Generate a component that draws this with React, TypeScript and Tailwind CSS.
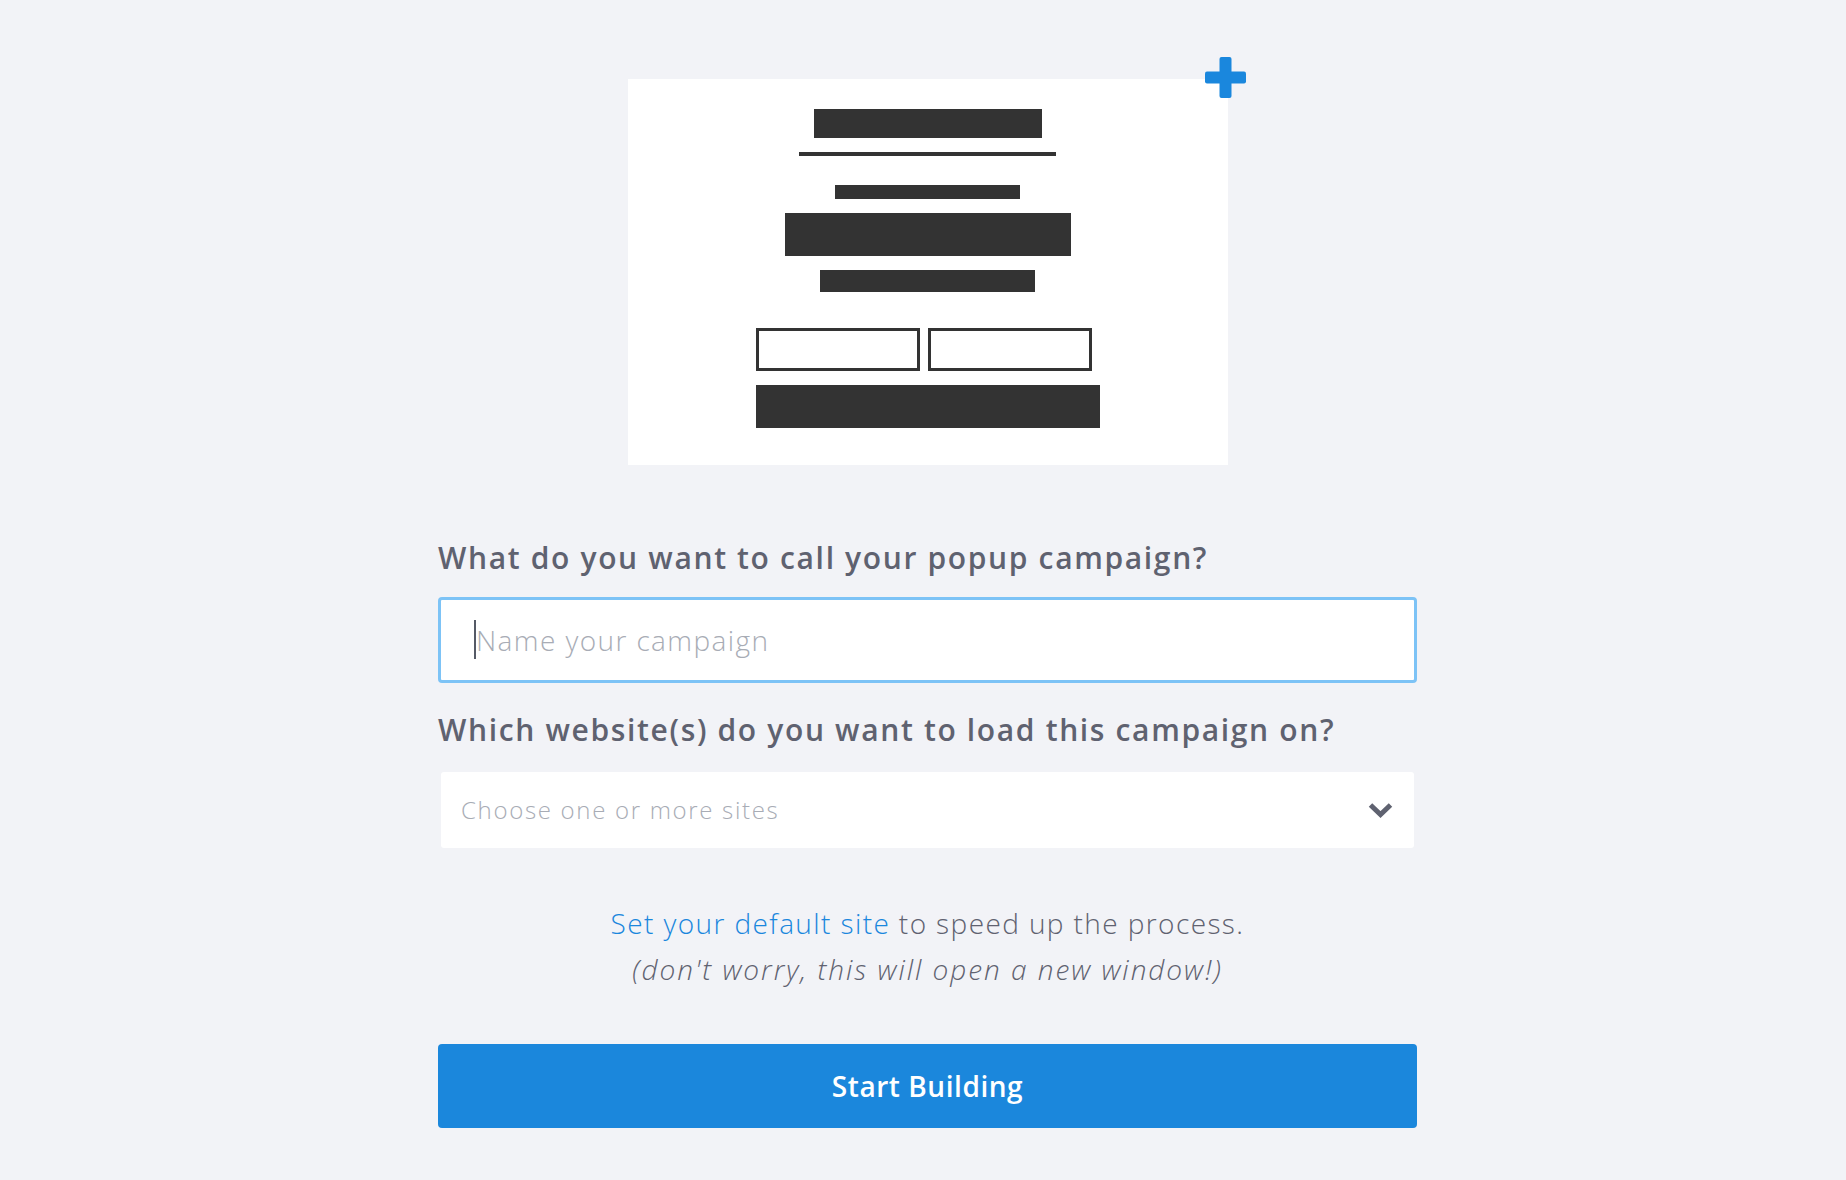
import React from "react";

function PlusIcon() {
  return (
    <svg viewBox="0 0 41 41" className="w-[41px] h-[41px]">
      <rect x="0" y="14.5" width="41" height="12" rx="2" fill="#1a87dd" />
      <rect x="14.5" y="0" width="12" height="41" rx="2" fill="#1a87dd" />
    </svg>
  );
}

function PopupSketch() {
  return (
    <div className="relative self-center w-[600px] h-[386px] bg-white flex flex-col items-center">
      <div className="absolute left-[577px] top-[-22px]">
        <PlusIcon />
      </div>
      <div className="mt-[30px] w-[228px] h-[29px] bg-[#333333]" />
      <div className="mt-[14px] w-[257px] h-[4px] bg-[#333333]" />
      <div className="mt-[29px] w-[185px] h-[14px] bg-[#333333]" />
      <div className="mt-[14px] w-[286px] h-[43px] bg-[#333333]" />
      <div className="mt-[14px] w-[215px] h-[22px] bg-[#333333]" />
      <div className="mt-[36px] w-[344px] flex gap-[8px]">
        <div className="w-[164px] h-[43px] border-[3px] border-[#333333]" />
        <div className="w-[164px] h-[43px] border-[3px] border-[#333333]" />
      </div>
      <div className="mt-[14px] w-[344px] h-[43px] bg-[#333333]" />
    </div>
  );
}

export default function App() {
  return (
    <div className="min-h-screen bg-[#f2f3f7] pt-[79px] pl-[9px] flex justify-center font-['Open_Sans',sans-serif]">
      <div className="w-[979px] flex flex-col">
        <PopupSketch />

        {/* Campaign name */}
        <label className="mt-[75px] text-[30px] leading-[36px] font-semibold tracking-[0.055em] text-[#5f6270]">
          What do you want to call your popup campaign?
        </label>
        <div className="relative mt-[21px]">
          <input
            type="text"
            placeholder="Name your campaign"
            className="w-full h-[86px] bg-white border-[3px] border-[#7dc3f6] rounded-[4px] pl-[35px] text-[28px] font-light tracking-[0.05em] text-[#5f6270] placeholder:text-[#a8acb5] outline-none"
          />
          <span className="absolute left-[36px] top-[23px] w-[2px] h-[39px] bg-[#555a66]" />
        </div>

        {/* Sites */}
        <label className="mt-[29px] text-[30px] leading-[36px] font-semibold tracking-[0.055em] text-[#5f6270]">
          Which website(s) do you want to load this campaign on?
        </label>
        <div className="mt-[24px] mx-[3px] h-[76px] bg-white rounded-[3px] flex items-center justify-between pl-[20px] pr-[21px]">
          <span className="text-[24px] font-light tracking-[0.07em] text-[#a8acb5]">Choose one or more sites</span>
          <svg viewBox="0 0 25 16" className="w-[25px] h-[16px]">
            <polyline
              points="2.5,3 12.5,12.5 22.5,3"
              fill="none"
              stroke="#5f6270"
              strokeWidth="5"
            />
          </svg>
        </div>

        {/* Default site hint */}
        <p className="mt-[58px] text-center text-[28px] leading-[34px] font-light tracking-[0.05em] text-[#5f6270]">
          <a href="#" className="text-[#1a87dd]">Set your default site</a> to speed up the process.
        </p>
        <p className="mt-[12px] text-center text-[28px] leading-[34px] font-light italic tracking-[0.07em] text-[#5f6270]">
          (don't worry, this will open a new window!)
        </p>

        <button className="mt-[58px] h-[84px] bg-[#1b87dc] rounded-[4px] text-white text-[28px] font-semibold tracking-[0.02em]">
          Start Building
        </button>
      </div>
    </div>
  );
}
